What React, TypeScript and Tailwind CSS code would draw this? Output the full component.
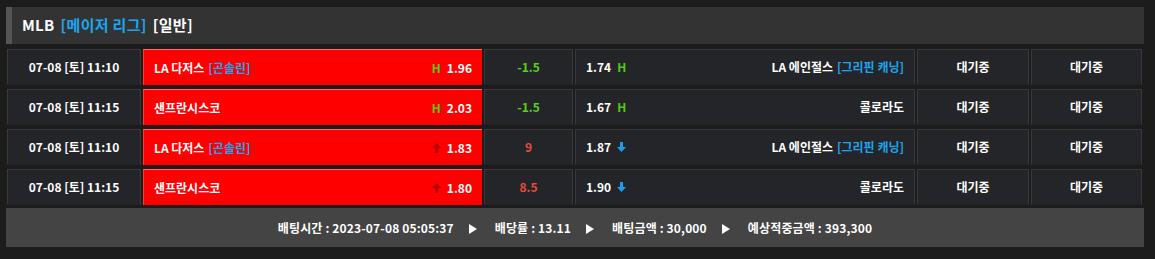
import React from "react";

type Row = {
  time: string;
  home: string;
  homePitcher?: string;
  homeMark: "H" | "up";
  homeOdds: string;
  line: string;
  lineColor: "green" | "red";
  awayOdds: string;
  awayMark: "H" | "down";
  away: string;
  awayPitcher?: string;
};

const rows: Row[] = [
  {
    time: "07-08 [토] 11:10",
    home: "LA 다저스",
    homePitcher: "[곤솔린]",
    homeMark: "H",
    homeOdds: "1.96",
    line: "-1.5",
    lineColor: "green",
    awayOdds: "1.74",
    awayMark: "H",
    away: "LA 에인절스",
    awayPitcher: "[그리핀 캐닝]",
  },
  {
    time: "07-08 [토] 11:15",
    home: "샌프란시스코",
    homeMark: "H",
    homeOdds: "2.03",
    line: "-1.5",
    lineColor: "green",
    awayOdds: "1.67",
    awayMark: "H",
    away: "콜로라도",
  },
  {
    time: "07-08 [토] 11:10",
    home: "LA 다저스",
    homePitcher: "[곤솔린]",
    homeMark: "up",
    homeOdds: "1.83",
    line: "9",
    lineColor: "red",
    awayOdds: "1.87",
    awayMark: "down",
    away: "LA 에인절스",
    awayPitcher: "[그리핀 캐닝]",
  },
  {
    time: "07-08 [토] 11:15",
    home: "샌프란시스코",
    homeMark: "up",
    homeOdds: "1.80",
    line: "8.5",
    lineColor: "red",
    awayOdds: "1.90",
    awayMark: "down",
    away: "콜로라도",
  },
];

const UpArrow = () => (
  <svg width="9" height="10" viewBox="0 0 9 10" className="mr-[6px]">
    <path d="M4.5 0 L9 5 L6 5 L6 10 L3 10 L3 5 L0 5 Z" fill="#b80000" />
  </svg>
);

const DownArrow = () => (
  <svg width="9" height="10" viewBox="0 0 9 10" className="ml-[6px]">
    <path d="M4.5 10 L9 5 L6 5 L6 0 L3 0 L3 5 L0 5 Z" fill="#1a9cf0" />
  </svg>
);

const Play = () => (
  <svg width="8" height="10" viewBox="0 0 8 10" className="ml-[15px] mr-[18px] mt-[2px]">
    <path d="M0 0 L8 5 L0 10 Z" fill="#ffffff" />
  </svg>
);

const cell =
  "h-full bg-[#242528] border border-[#38393b] border-b-[#202123] flex items-center";

export default function App() {
  return (
    <div
      className="w-[1155px] h-[259px] bg-[#1c1c1c] pl-[6px] pt-[7px] text-white font-bold text-[12px]"
      style={{ fontFamily: '"Noto Sans CJK KR", "Noto Sans", sans-serif' }}
    >
      <div className="w-[1138px]">
        {/* header */}
        <div className="h-[37px] bg-[#333333] border-l-[6px] border-[#555555] flex items-center pl-[10px] text-[15px] tracking-[0.3px]">
          <span>MLB</span>
          <span className="ml-[6px] text-[#1aa7f2]">[메이저 리그]</span>
          <span className="ml-[6px]">[일반]</span>
        </div>

        {/* rows */}
        <div className="mt-[5px] pl-[1px] flex flex-col gap-[4px]">
          {rows.map((r, i) => (
            <div key={i} className="h-[36px] flex gap-[2px]">
              <div className={`${cell} w-[134px] justify-center`}>{r.time}</div>
              <div className="w-[339px] h-full bg-[#ff0000] border-t border-[#ff6a6a] border-l border-l-[#ff3a3a] flex items-center justify-between px-[10px]">
                <span>
                  {r.home}
                  {r.homePitcher && (
                    <span className="ml-[4px] text-[#1aa7f2]">{r.homePitcher}</span>
                  )}
                </span>
                <span className="flex items-center">
                  {r.homeMark === "H" ? (
                    <span className="mr-[6px] text-[#4fcb12]">H</span>
                  ) : (
                    <UpArrow />
                  )}
                  {r.homeOdds}
                </span>
              </div>
              <div
                className={`${cell} w-[89px] justify-center ${
                  r.lineColor === "green" ? "text-[#5bd116]" : "text-[#ea4a3c]"
                }`}
              >
                {r.line}
              </div>
              <div className={`${cell} w-[340px] justify-between px-[10px]`}>
                <span className="flex items-center">
                  {r.awayOdds}
                  {r.awayMark === "H" ? (
                    <span className="ml-[6px] text-[#4fcb12]">H</span>
                  ) : (
                    <DownArrow />
                  )}
                </span>
                <span>
                  {r.away}
                  {r.awayPitcher && (
                    <span className="ml-[4px] text-[#1aa7f2]">{r.awayPitcher}</span>
                  )}
                </span>
              </div>
              <div className={`${cell} w-[112px] justify-center`}>대기중</div>
              <div className={`${cell} w-[111px] justify-center`}>대기중</div>
            </div>
          ))}
        </div>

        {/* footer */}
        <div className="mt-[3px] h-[39px] bg-[#444444] flex items-center justify-center tracking-[0.15px]">
          <span>배팅시간 : 2023-07-08 05:05:37</span>
          <Play />
          <span>배당률 : 13.11</span>
          <Play />
          <span>배팅금액 : 30,000</span>
          <Play />
          <span>예상적중금액 : 393,300</span>
        </div>
      </div>
    </div>
  );
}
